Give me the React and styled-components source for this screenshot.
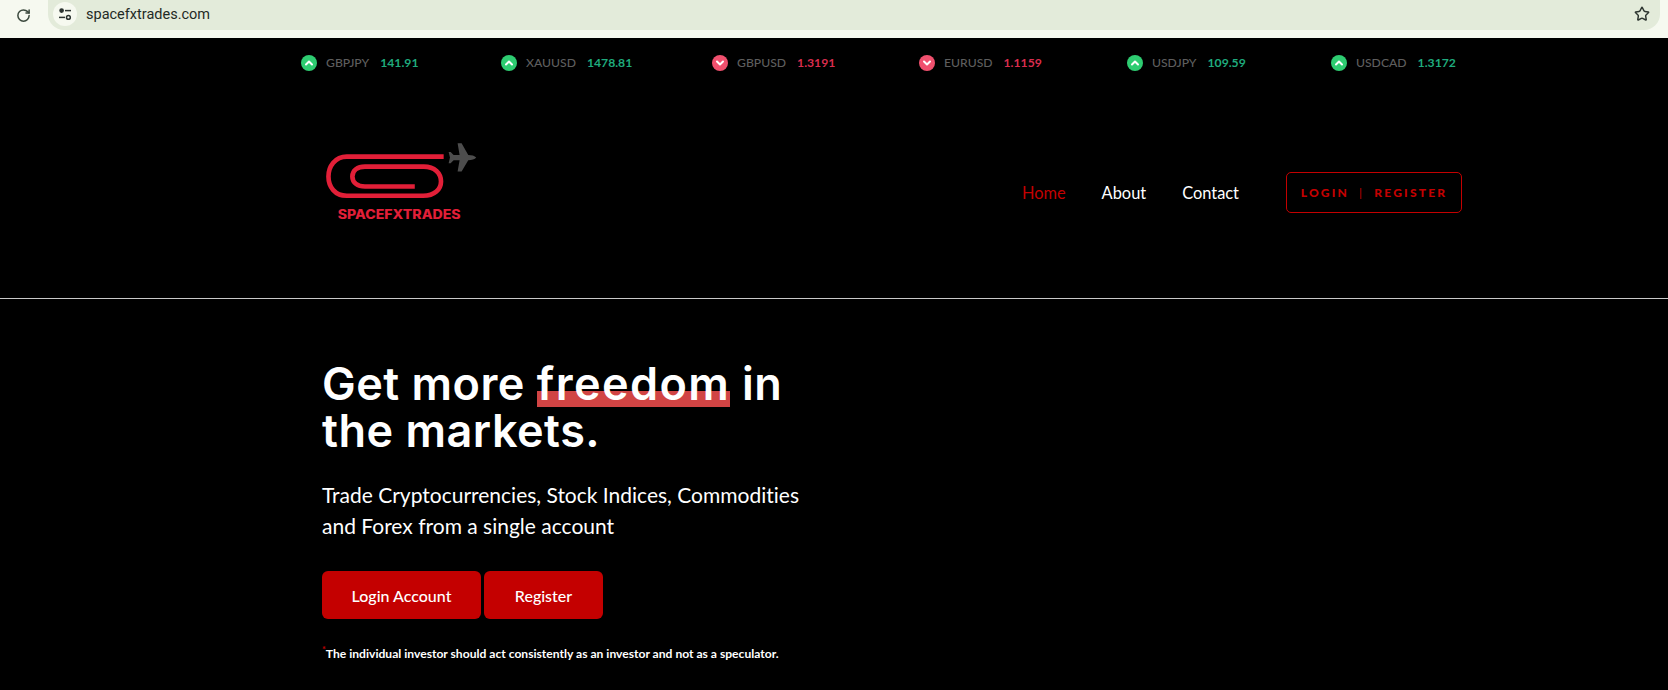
import React from 'react'
import styled, { createGlobalStyle } from 'styled-components'
import { RotateCw, Star, ChevronUp, ChevronDown } from 'lucide-react'

const quotes = [
  { pair: 'GBPJPY', value: '141.91', up: true, width: 200 },
  { pair: 'XAUUSD', value: '1478.81', up: true, width: 211 },
  { pair: 'GBPUSD', value: '1.3191', up: false, width: 207 },
  { pair: 'EURUSD', value: '1.1159', up: false, width: 208 },
  { pair: 'USDJPY', value: '109.59', up: true, width: 204 },
  { pair: 'USDCAD', value: '1.3172', up: true, width: 125 },
]

function Logo() {
  return (
    <LogoSvg viewBox="70 30 470 250" width="157" height="83">
      <path
        d="M432 80 H140 C105 80 85 110 85 140 C85 172 105 198 140 198 H370 C405 198 424 178 424 155 C424 130 405 110 372 110 H195 C172 110 157 122 157 140 C157 158 172 170 195 170 H345"
        fill="none"
        stroke="#e21f38"
        strokeWidth="14"
      />
      <path
        d="M530 83 C526 77 516 75 506 75 L486 40 L474 40 L480 75 L462 75 L453 66 L447 66 L451 83 L447 100 L453 100 L462 91 L480 91 L474 125 L486 125 L506 91 C516 91 526 89 530 83 Z"
        fill="#4d4d4d"
      />
      <LogoText x="113" y="268" textLength="370" lengthAdjust="spacingAndGlyphs">SPACEFXTRADES</LogoText>
    </LogoSvg>
  )
}

export default function App() {
  return (
    <Page>
      <GlobalStyle />
      <BrowserBar>
        <RotateCw size={15} color="#3c4a3e" strokeWidth={2.4} />
        <AddressPill>
          <SiteInfo>
            <svg width="14" height="14" viewBox="0 0 14 14" fill="none" stroke="#2b3330" strokeWidth="1.5">
              <circle cx="3.6" cy="3.6" r="1.6" fill="#2b3330" />
              <path d="M7 3.6 H13" />
              <path d="M1 10.4 H7" />
              <circle cx="10.4" cy="10.4" r="1.9" />
            </svg>
          </SiteInfo>
          <Url>spacefxtrades.com</Url>
          <StarSlot>
            <Star size={16} color="#2f3732" strokeWidth={2.2} />
          </StarSlot>
        </AddressPill>
      </BrowserBar>

      <Ticker>
        {quotes.map((q) => (
          <Quote key={q.pair} $width={q.width}>
            <Arrow $up={q.up}>
              {q.up ? <ChevronUp size={12} strokeWidth={4} /> : <ChevronDown size={12} strokeWidth={4} />}
            </Arrow>
            <Pair>{q.pair}</Pair>
            <Price $up={q.up}>{q.value}</Price>
          </Quote>
        ))}
      </Ticker>

      <Header>
        <Logo />
        <Nav>
          <NavLink $active>Home</NavLink>
          <NavLink>About</NavLink>
          <NavLink>Contact</NavLink>
          <AuthBox>
            <span>LOGIN</span>
            <AuthDivider>|</AuthDivider>
            <span>REGISTER</span>
          </AuthBox>
        </Nav>
      </Header>

      <Hero>
        <Title>
          Get more <Marked>freedom</Marked> in
          <br />
          the markets.
        </Title>
        <Lead>
          Trade Cryptocurrencies, Stock Indices, Commodities
          <br />
          and Forex from a single account
        </Lead>
        <Buttons>
          <CtaButton $width={159}>Login Account</CtaButton>
          <CtaButton $width={119}>Register</CtaButton>
        </Buttons>
        <Note>
          <sup>*</sup>The individual investor should act consistently as an investor and not as a speculator.
        </Note>
      </Hero>
    </Page>
  )
}

const GlobalStyle = createGlobalStyle`
  html, body {
    margin: 0;
    padding: 0;
    background: #000;
  }
  * {
    box-sizing: border-box;
  }
`

const Page = styled.div`
  width: 1668px;
  height: 690px;
  overflow: hidden;
  background: #000;
  color: #fff;
  font-family: 'Lato', 'Liberation Sans', sans-serif;
  font-variant-ligatures: none;
`

const BrowserBar = styled.div`
  height: 38px;
  padding: 0 8px 7px 16px;
  display: flex;
  align-items: center;
  gap: 17px;
  background: #f6f9f0;
`

const AddressPill = styled.div`
  flex: 1;
  height: 31px;
  margin-top: -3px;
  padding: 0 10px 0 5px;
  display: flex;
  align-items: center;
  gap: 9px;
  border-radius: 0 0 16px 16px;
  background: #e3ebda;
`

const SiteInfo = styled.div`
  width: 24px;
  height: 24px;
  border-radius: 50%;
  display: flex;
  align-items: center;
  justify-content: center;
  background: #f6f9f0;
`

const Url = styled.div`
  flex: 1;
  font-family: 'Roboto', 'Liberation Sans', sans-serif;
  font-size: 14.5px;
  color: #1f2a25;
`

const StarSlot = styled.div`
  display: flex;
`

const Ticker = styled.div`
  height: 49px;
  padding-left: 301px;
  display: flex;
  align-items: center;
`

const Quote = styled.div`
  width: ${(p) => p.$width}px;
  display: flex;
  align-items: center;
  font-size: 12.2px;
  font-weight: 500;
`

const Arrow = styled.span`
  width: 16px;
  height: 16px;
  margin-right: 9px;
  border-radius: 50%;
  display: flex;
  align-items: center;
  justify-content: center;
  color: #fff;
  background: ${(p) => (p.$up ? '#2ecc71' : '#f0506e')};
`

const Pair = styled.span`
  margin-right: 11px;
  color: #5e5e5e;
`

const Price = styled.span`
  font-weight: 700;
  color: ${(p) => (p.$up ? '#1fab7d' : '#d92d4e')};
`

const Header = styled.header`
  height: 212px;
  padding: 0 206px 0 323px;
  display: flex;
  align-items: center;
  justify-content: space-between;
  border-bottom: 1px solid #c9c9c9;
`

const LogoSvg = styled.svg`
  margin-top: -23px;
`

const LogoText = styled.text`
  font-family: 'Inter', 'Liberation Sans', sans-serif;
  font-size: 38px;
  font-weight: 800;
  fill: #e21f38;
`

const Nav = styled.nav`
  display: flex;
  align-items: center;
`

const NavLink = styled.a`
  margin-right: 36px;
  font-size: 16.4px;
  color: ${(p) => (p.$active ? '#c40000' : '#fff')};
`

const AuthBox = styled.div`
  width: 176px;
  height: 41px;
  margin-left: 11px;
  display: flex;
  align-items: center;
  justify-content: center;
  gap: 10px;
  border: 1px solid #c40000;
  border-radius: 5px;
  font-size: 12px;
  font-weight: 900;
  letter-spacing: 2.2px;
  color: #c40000;
`

const AuthDivider = styled.span`
  font-weight: 400;
`

const Hero = styled.section`
  padding: 61px 0 0 322px;
`

const Title = styled.h1`
  margin: 0;
  font-family: 'Inter', 'Liberation Sans', sans-serif;
  font-size: 45px;
  font-weight: 600;
  letter-spacing: 0.5px;
  line-height: 47px;
  color: #fff;
`

const Marked = styled.span`
  position: relative;
  display: inline-block;
  z-index: 0;
  letter-spacing: 1.4px;

  &::before {
    content: '';
    position: absolute;
    z-index: -1;
    left: 0;
    right: 0;
    top: 31px;
    height: 16px;
    background: #d14444;
  }
`

const Lead = styled.p`
  margin: 25px 0 0;
  font-size: 21px;
  line-height: 31px;
  color: #fff;
`

const Buttons = styled.div`
  margin-top: 30px;
  display: flex;
  gap: 3px;
`

const CtaButton = styled.button`
  width: ${(p) => p.$width}px;
  height: 48px;
  border: none;
  border-radius: 6px;
  font-family: inherit;
  font-size: 16px;
  font-weight: 500;
  color: #fff;
  background: #c40000;
`

const Note = styled.p`
  margin: 27px 0 0;
  font-size: 12.1px;
  font-weight: 700;
  color: #fff;

  sup {
    color: #c40000;
    font-size: 9px;
    line-height: 0;
  }
`
